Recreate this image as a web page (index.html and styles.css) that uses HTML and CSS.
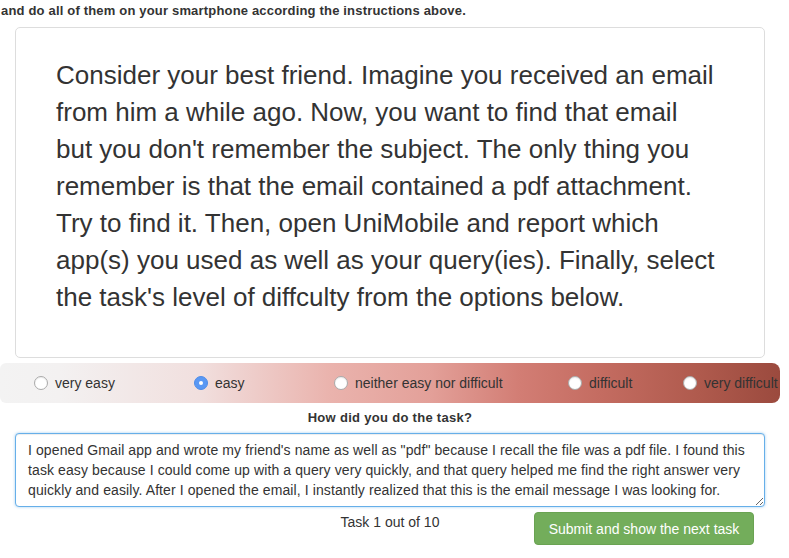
FILE: index.html
```html
<!DOCTYPE html>
<html>
<head>
<meta charset="utf-8">
<link rel="stylesheet" href="styles.css">
</head>
<body>
<div class="page">
  <p class="intro">and do all of them on your smartphone according the instructions above.</p>
  <div class="card">
    <p class="task">Consider your best friend. Imagine you received an email from him a while ago. Now, you want to find that email but you don't remember the subject. The only thing you remember is that the email contained a pdf attachment. Try to find it. Then, open UniMobile and report which app(s) you used as well as your query(ies). Finally, select the task's level of diffculty from the options below.</p>
  </div>
  <div class="scale">
    <label class="opt"><span class="radio"></span>very easy</label>
    <label class="opt"><span class="radio checked"></span>easy</label>
    <label class="opt"><span class="radio"></span>neither easy nor difficult</label>
    <label class="opt"><span class="radio"></span>difficult</label>
    <label class="opt"><span class="radio"></span>very difficult</label>
  </div>
  <div class="question">How did you do the task?</div>
  <div class="answer-wrap">
    <textarea class="answer">I opened Gmail app and wrote my friend's name as well as "pdf" because I recall the file was a pdf file. I found this task easy because I could come up with a query very quickly, and that query helped me find the right answer very quickly and easily. After I opened the email, I instantly realized that this is the email message I was looking for.</textarea>
  </div>
  <div class="footer">
    <div></div>
    <div class="progress">Task 1 out of 10</div>
    <div class="btn-cell"><button class="submit">Submit and show the next task</button></div>
  </div>
</div>
</body>
</html>
```
FILE: styles.css
```css
* { box-sizing: border-box; }
html, body { margin: 0; padding: 0; background: #fff; }
body {
  font-family: "Liberation Sans", Arial, Helvetica, sans-serif;
  color: #333;
  width: 789px;
  height: 558px;
  overflow: hidden;
}
.page { padding: 0; }
.intro {
  margin: 0;
  padding: 3px 0 0 1px;
  font-size: 13px;
  font-weight: bold;
  line-height: 16px;
  height: 27px;
  white-space: nowrap;
  letter-spacing: 0.18px;
}
.card {
  margin: 0 24px 0 15px;
  width: 750px;
  height: 331px;
  border: 1px solid #ddd;
  border-radius: 5px;
  padding: 29px 46px 0 40px;
}
.task {
  margin: 0;
  font-size: 26px;
  line-height: 37px;
  color: #333;
}
.scale {
  margin-top: 5px;
  width: 780px;
  height: 40px;
  border-radius: 6px 8px 8px 6px;
  background: linear-gradient(to right, #f3f3f3 0px, #f3f1f1 60px, #f1dfde 200px, #eab3ad 330px, #e3a099 430px, #d27d74 520px, #c46c61 600px, #af5a4d 700px, #9b4a3e 780px);
  display: grid;
  grid-template-columns: 160px 140px 234px 115px 1fr;
  padding-left: 34px;
  align-items: center;
  overflow: hidden;
  white-space: nowrap;
}
.opt {
  display: flex;
  align-items: center;
  font-size: 14px;
  color: #333;
  line-height: 20px;
}
.radio {
  width: 14px;
  height: 14px;
  border-radius: 50%;
  background: #fff;
  border: 1px solid #aaa;
  margin-right: 7px;
  flex: none;
  position: relative;
  box-shadow: inset 0 1px 1px rgba(0,0,0,0.08);
}
.radio.checked {
  background: #5a98f4;
  border-color: #4f8ce8;
  box-shadow: none;
}
.radio.checked::after {
  content: "";
  position: absolute;
  left: 4px;
  top: 4px;
  width: 4px;
  height: 4px;
  border-radius: 50%;
  background: #fff;
}
.question {
  text-align: center;
  font-size: 13px;
  font-weight: bold;
  line-height: 16px;
  letter-spacing: 0.3px;
  margin-top: 7px;
  height: 23px;
  width: 780px;
}
.answer-wrap { padding-left: 15px; }
.answer {
  display: block;
  width: 750px;
  height: 74px;
  margin: 0;
  border: 1px solid #66afe9;
  border-radius: 4px;
  box-shadow: inset 0 1px 1px rgba(0,0,0,0.075), 0 0 3px rgba(102,175,233,0.6);
  padding: 6px 12px;
  font-family: "Liberation Sans", Arial, Helvetica, sans-serif;
  font-size: 14px;
  line-height: 20px;
  letter-spacing: 0.1px;
  color: #333;
  resize: vertical;
  outline: none;
  overflow: hidden;
}
.footer {
  width: 750px;
  margin-left: 15px;
  margin-top: 5px;
  display: grid;
  grid-template-columns: 1fr auto 1fr;
  align-items: start;
}
.progress {
  font-size: 14px;
  line-height: 18px;
  padding-top: 1px;
  color: #333;
}
.btn-cell { display: flex; justify-content: flex-end; padding-right: 11px; }
.submit {
  width: 220px;
  height: 33px;
  background: #73ad5b;
  border: 1px solid #6aa352;
  border-radius: 4px;
  color: #fff;
  font-family: "Liberation Sans", Arial, Helvetica, sans-serif;
  font-size: 14px;
  padding: 0;
}
```
